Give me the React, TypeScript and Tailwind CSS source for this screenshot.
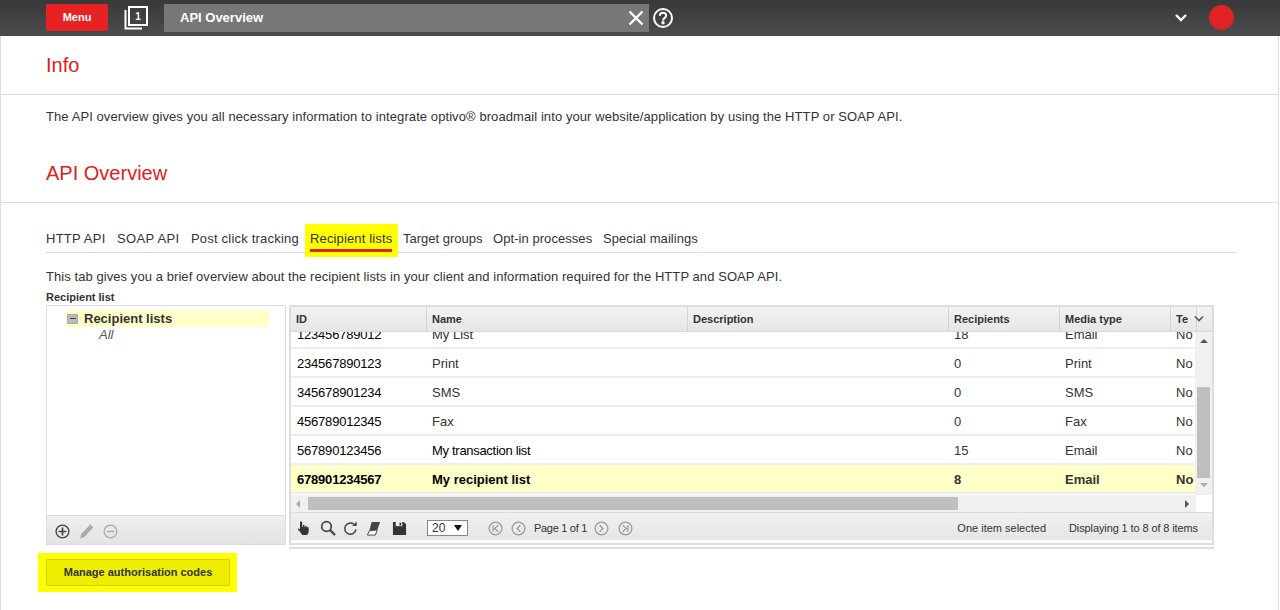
import React from "react";

const font = "font-['Liberation_Sans',Arial,sans-serif]";

const cols = ["w-[136px]", "w-[261px]", "w-[261px]", "w-[111px]", "w-[111px]", "w-[26px]"];

const rows = [
  ["123456789012", "My List", "", "18", "Email", "No"],
  ["234567890123", "Print", "", "0", "Print", "No"],
  ["345678901234", "SMS", "", "0", "SMS", "No"],
  ["456789012345", "Fax", "", "0", "Fax", "No"],
  ["567890123456", "My transaction list", "", "15", "Email", "No"],
  ["678901234567", "My recipient list", "", "8", "Email", "No"],
];

const headers = ["ID", "Name", "Description", "Recipients", "Media type", "Te"];
const tabs = [
  { t: "HTTP API", c: "w-[66px] pl-0 tracking-[0.25px]" },
  { t: "SOAP API", c: "w-[74px] pl-[5px] tracking-[0.35px]" },
  { t: "Post click tracking", c: "w-[119px] pl-[5px] tracking-[0.2px]" },
  { t: "Recipient lists", c: "w-[93px] pl-[5px] bg-[#ffff00] tracking-[0.14px]" },
  { t: "Target groups", c: "w-[90px] pl-[5px]" },
  { t: "Opt-in processes", c: "w-[110px] pl-[5px] tracking-[0.06px]" },
  { t: "Special mailings", c: "w-[110px] pl-[5px] tracking-[0.06px]" },
];

function PagerCircle({ d }: { d: string }) {
  return (
    <svg width="15" height="15" viewBox="0 0 16 16" fill="none" stroke="#9a9a9a" strokeWidth="1.3">
      <circle cx="8" cy="8" r="6.8" />
      <path d={d} />
    </svg>
  );
}

export default function App() {
  return (
    <div className={`${font} w-[1280px] h-[610px] overflow-hidden bg-white text-[#333]`}>
      <header className="h-[36px] bg-gradient-to-b from-[#383838] to-[#4c4c4c] flex items-center pl-[46px] pr-[46px] border-b border-[#444]">
        <button className="w-[62px] h-[27px] bg-[#e62222] rounded-[2px] text-white text-[11px] font-bold">Menu</button>
        <svg className="ml-[16px]" width="24" height="24" viewBox="0 0 24 24" fill="none" stroke="#fff" strokeWidth="2">
          <path d="M1.5 4v18.5H18" />
          <rect x="5" y="1" width="18" height="18" />
          <text x="14" y="14" fill="#fff" stroke="none" fontSize="10" fontWeight="700" textAnchor="middle">1</text>
        </svg>
        <div className="ml-[16px] w-[485px] h-[28px] bg-[#777] flex items-center pl-[16px] pr-[5px] text-white text-[13px] font-bold">
          <span className="flex-1">API Overview</span>
          <svg width="16" height="16" viewBox="0 0 16 16" stroke="#fff" strokeWidth="2.4"><path d="M1.5 1.5l13 13M14.5 1.5l-13 13" /></svg>
        </div>
        <svg className="ml-[3px]" width="22" height="22" viewBox="0 0 22 22" fill="none" stroke="#fff" strokeWidth="2">
          <circle cx="11" cy="11" r="9" />
          <path d="M7.8 8.8c0-2 1.4-3 3.2-3s3.2 1.1 3.2 2.8c0 2.6-3.2 2.4-3.2 4.9" />
          <circle cx="11" cy="15.8" r="0.7" fill="#fff" />
        </svg>
        <div className="flex-1" />
        <svg width="14" height="10" viewBox="0 0 14 10" fill="none" stroke="#fff" strokeWidth="2.4"><path d="M2 2l5 5 5-5" /></svg>
        <div className="ml-[21px] w-[25px] h-[25px] rounded-full bg-[#e02222]" />
      </header>

      <main className="w-[1279px] border-x border-[#ddd] h-[574px] flex flex-col">
        <section className="h-[59px] shrink-0 border-b border-[#ddd] pl-[45px] flex items-center">
          <h1 className="text-[20px] text-[#e02020] leading-none">Info</h1>
        </section>
        <p className="pl-[45px] mt-[14px] text-[13px] leading-[16px] tracking-[0.083px]">
          The API overview gives you all necessary information to integrate optivo® broadmail into your website/application by using the HTTP or SOAP API.
        </p>
        <section className="mt-[18px] h-[60px] shrink-0 border-b border-[#ddd] pl-[45px] flex items-center">
          <h1 className="text-[20px] text-[#e02020] leading-none">API Overview</h1>
        </section>

        <div className="ml-[45px] mt-[21px] h-[29px] shrink-0 border-b border-[#ddd] flex items-start w-[1190px]">
          {tabs.map(({ t, c }) => {
            const active = t === "Recipient lists";
            return (
              <div key={t} className={`h-[33px] shrink-0 pt-[7px] text-[13px] leading-[16px] whitespace-nowrap ${c}`}>
                <span className={`block w-fit pb-[2px] ${active ? "border-b-[3px] border-[#dd2200]" : ""}`}>{t}</span>
              </div>
            );
          })}
        </div>

        <p className="pl-[45px] mt-[16px] text-[13px] leading-[16px] tracking-[0.07px]">
          This tab gives you a brief overview about the recipient lists in your client and information required for the HTTP and SOAP API.
        </p>
        <div className="pl-[45px] mt-[6px] text-[11px] leading-[12px] font-bold">Recipient list</div>

        <div className="ml-[45px] mt-[2px] flex items-start">
          <div className="w-[240px] h-[240px] border border-[#ddd] flex flex-col">
            <div className="flex-1 pl-[19px] pt-[4px]">
              <div className="w-[203px] h-[17px] bg-[#ffffc8] flex items-center pl-[1px]">
                <span className="w-[11px] h-[10px] bg-[#bbb] border border-[#aaa] rounded-[1px] flex items-center justify-center">
                  <span className="w-[6px] h-[1.5px] bg-[#444]" />
                </span>
                <span className="ml-[6px] text-[13px] font-bold">Recipient lists</span>
              </div>
              <div className="pl-[33px] text-[13px] leading-[15px] italic text-[#555]">All</div>
            </div>
            <div className="h-[29px] pt-[3px] bg-gradient-to-b from-[#efefef] to-[#e4e4e4] border-t border-[#ddd] flex items-center pl-[8px] gap-[9px]">
              <svg width="15" height="15" viewBox="0 0 16 16" fill="none" stroke="#444" strokeWidth="1.5">
                <circle cx="8" cy="8" r="6.8" />
                <path d="M8 3.8v8.4M3.8 8h8.4" strokeWidth="1.8" />
              </svg>
              <svg width="15" height="15" viewBox="0 0 16 16" fill="#aaa">
                <path d="M12 0.5l3.2 3L6 13.5 1 15.5l1.6-5z" />
              </svg>
              <svg width="15" height="15" viewBox="0 0 16 16" fill="none" stroke="#aaa" strokeWidth="1.3">
                <circle cx="8" cy="8" r="6.8" />
                <path d="M4 8h8" strokeWidth="1.6" />
              </svg>
            </div>
          </div>

          <div className="ml-[3px] w-[925px]">
            <div className="w-[925px] h-[240px] border-2 border-[#ddd] flex flex-col overflow-hidden">
              <div className="h-[25px] shrink-0 flex bg-gradient-to-b from-[#f2f2f2] to-[#e6e6e6] border-b border-[#d8d8d8] relative">
                {headers.map((h, i) => (
                  <div key={h} className={`${cols[i]} shrink-0 border-r border-[#d4d4d4] last:border-r-0 pl-[5px] flex items-center text-[11px] font-bold`}>
                    {h}
                  </div>
                ))}
                <svg className="absolute right-[8px] top-[8px]" width="10" height="8" viewBox="0 0 10 8" fill="none" stroke="#555" strokeWidth="1.6"><path d="M1 1.5l4 4 4-4" /></svg>
              </div>
              <div className="h-[163px] shrink-0 flex overflow-hidden">
                <div className="w-[905px] overflow-hidden">
                  <div className="-mt-[12px]">
                    {rows.map((r, ri) => {
                      const sel = ri === 5;
                      return (
                        <div key={r[0]} className={`h-[29px] flex border-b-2 border-[#eee] ${sel ? "bg-[#ffffc8] font-bold" : ""}`}>
                          {r.map((c, i) => (
                            <div key={i} className={`${cols[i]} shrink-0 flex items-center pt-[2px] text-[13px] whitespace-nowrap ${i === 0 ? "pl-[6px] text-[#000] tracking-[-0.2px]" : "pl-[5px]"} ${i === 1 && ri === 4 ? "text-[#000] tracking-[-0.3px]" : ""} ${i === 1 && ri === 5 ? "text-[#000]" : ""}`}>
                              {c}
                            </div>
                          ))}
                        </div>
                      );
                    })}
                  </div>
                </div>
                <div className="w-[17px] bg-[#f0f0f0] flex flex-col items-center">
                  <span className="mt-[7px] w-0 h-0 border-x-[4px] border-x-transparent border-b-[4px] border-b-[#555]" />
                  <div className="mt-[44px] w-[13px] h-[91px] bg-[#bfbfbf]" />
                  <span className="mt-[5px] w-0 h-0 border-x-[4px] border-x-transparent border-t-[4px] border-t-[#aaa]" />
                </div>
              </div>
              <div className="h-[17px] shrink-0 flex">
                <div className="w-[905px] bg-[#f0f0f0] flex items-center pl-[5px]">
                  <span className="w-0 h-0 border-y-[4px] border-y-transparent border-r-[4px] border-r-[#aaa]" />
                  <div className="ml-[8px] w-[650px] h-[13px] bg-[#bfbfbf]" />
                  <div className="flex-1" />
                  <span className="mr-[7px] w-0 h-0 border-y-[4px] border-y-transparent border-l-[4px] border-l-[#555]" />
                </div>
              </div>
              <div className="h-[28px] shrink-0 pt-[3px] bg-gradient-to-b from-[#f0f0f0] to-[#e6e6e6] border-t border-[#ddd] flex items-center pl-[5px] pr-[14px] text-[11px]">
                <svg width="16" height="16" viewBox="0 0 16 16" fill="#333"><path d="M5 1.5c.9 0 1.2.6 1.2 1.2V7l.8-.2V5c.9-.6 1.5 0 1.5.4V7l.8.1V5.8c.9-.4 1.4 0 1.4.6v1l.7.2V7c.8-.2 1.3.2 1.3.8V11c0 1.6-.8 3.5-2 4H6.5C5.5 14 3 10.8 2 9.5c-.4-.7.1-1.4 1-1l1 1V2.7c0-.7.3-1.2 1-1.2z" /></svg>
                <svg className="ml-[8px]" width="16" height="16" viewBox="0 0 16 16" fill="none" stroke="#444" strokeWidth="1.7"><circle cx="6.5" cy="6.5" r="4.8" /><path d="M10 10l5 5" strokeWidth="2.4" /></svg>
                <svg className="ml-[7px]" width="15" height="15" viewBox="0 0 16 16" fill="none" stroke="#444" strokeWidth="1.6"><path d="M13.8 9a6 6 0 1 1-2.2-5.5" /><path d="M9.8 5.2h4.8V0.6z" fill="#444" stroke="none" /></svg>
                <svg className="ml-[8px]" width="15" height="15" viewBox="0 0 16 16"><path d="M6 1h9l-3 8.5-8.5 1z" fill="#444" /><path d="M3.5 10.5l8.5-1L10 15H1.5z" fill="#fff" stroke="#444" strokeWidth="1" /></svg>
                <svg className="ml-[11px]" width="15" height="15" viewBox="0 0 16 16" fill="#333"><path d="M1 1h11.5L15 3.5V15H1z" /><rect x="4" y="1" width="7" height="4.5" fill="#eee" /><rect x="8" y="1.8" width="1.8" height="3" fill="#333" /></svg>
                <div className="ml-[20px] w-[41px] h-[16px] bg-white border border-[#888] flex items-center pl-[4px] pr-[5px] text-[12px]">
                  <span className="flex-1">20</span>
                  <span className="w-0 h-0 border-x-[4px] border-x-transparent border-t-[6px] border-t-[#111]" />
                </div>
                <div className="ml-[20px] flex items-center gap-[8px]">
                  <PagerCircle d="M5.5 4.5v7M11 4.5L7 8l4 3.5" />
                  <PagerCircle d="M10 4.5L6.5 8l3.5 3.5" />
                </div>
                <span className="ml-[8px] tracking-[-0.3px]">Page 1 of 1</span>
                <div className="ml-[7px] flex items-center gap-[9px]">
                  <PagerCircle d="M6 4.5L9.5 8 6 11.5" />
                  <PagerCircle d="M10.5 4.5v7M5 4.5L9 8l-4 3.5" />
                </div>
                <div className="flex-1" />
                <span>One item selected</span>
                <span className="ml-[23px] tracking-[-0.11px]">Displaying 1 to 8 of 8 items</span>
              </div>
            </div>
            <div className="mt-[2px] h-[2px] bg-[#ddd]" />
          </div>
        </div>

        <div className="ml-[37px] mt-[4px] w-[199px] h-[39px] bg-[#ffff00] flex items-center pl-[8px]">
          <button className="w-[184px] h-[27px] bg-[#eeee00] border border-[#d0d000] rounded-[1px] text-[11px] font-bold text-[#333]">
            Manage authorisation codes
          </button>
        </div>
      </main>
    </div>
  );
}
